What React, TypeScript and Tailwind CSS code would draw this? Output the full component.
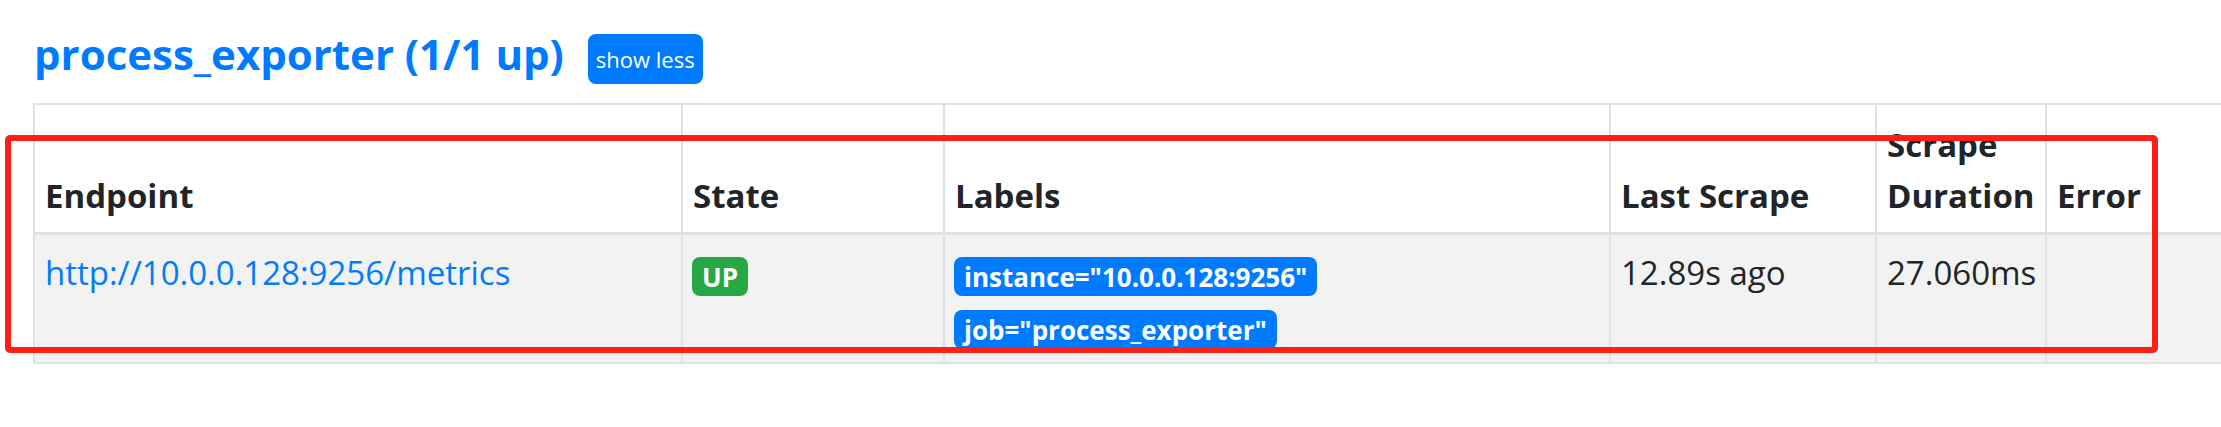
const headers = ["Endpoint", "State", "Labels", "Last Scrape", "Scrape Duration", "Error"];

const labels = ['instance="10.0.0.128:9256"', 'job="process_exporter"'];

const Badge = ({ color, children }: { color: string; children: React.ReactNode }) => (
  <span className={`inline-block rounded-[8px] px-[10px] py-[6.5px] text-[26px] font-bold leading-none text-white ${color}`}>
    {children}
  </span>
);

const App = () => {
  return (
    <div className="relative h-[427px] w-[2221px] overflow-hidden bg-white font-['Open_Sans',sans-serif] text-[#212529]">
      <div className="pl-[33px] pt-[34px]">
        <div className="flex h-[50px] items-center">
          <h2 className="mb-[10px] ml-[1px] text-[42px] font-bold leading-none text-[#007bff]">process_exporter (1/1 up)</h2>
          <button className="ml-[24px] h-[50px] rounded-[8px] bg-[#007bff] px-[8px] text-[22px] text-white">show less</button>
        </div>

        <div className="mt-[19px] grid w-[2300px] grid-cols-[648px_262px_666px_266px_170px_288px] border-l-2 border-t-2 border-[#dee2e6]">
          {headers.map((h) => (
            <div
              key={h}
              className="flex h-[130px] flex-col justify-end border-b-[3px] border-r-2 border-[#dee2e6] bg-white px-[10px] pb-[11px] text-[33px] font-bold leading-[51px]"
            >
              {h === "Scrape Duration" ? (
                <>
                  <span>Scrape</span>
                  <span>Duration</span>
                </>
              ) : (
                h
              )}
            </div>
          ))}

          <div className="h-[129px] border-b-2 border-r-2 border-[#dee2e6] bg-[#f2f2f2] px-[10px] pt-[12px] text-[33px] leading-[51px]">
            <a className="text-[#007bff]">http://10.0.0.128:9256/metrics</a>
          </div>
          <div className="border-b-2 border-r-2 border-[#dee2e6] bg-[#f2f2f2] px-[9px] pt-[22px]">
            <Badge color="bg-[#28a745]">UP</Badge>
          </div>
          <div className="flex flex-col items-start gap-[14px] border-b-2 border-r-2 border-[#dee2e6] bg-[#f2f2f2] px-[9px] pt-[22px]">
            {labels.map((l) => (
              <Badge key={l} color="bg-[#007bff]">
                {l}
              </Badge>
            ))}
          </div>
          <div className="border-b-2 border-r-2 border-[#dee2e6] bg-[#f2f2f2] px-[10px] pt-[12px] text-[33px] leading-[51px]">
            12.89s ago
          </div>
          <div className="border-b-2 border-r-2 border-[#dee2e6] bg-[#f2f2f2] px-[10px] pt-[12px] text-[33px] leading-[51px]">
            27.060ms
          </div>
          <div className="border-b-2 border-r-2 border-[#dee2e6] bg-[#f2f2f2]" />
        </div>
      </div>

      <div className="pointer-events-none absolute left-[5px] top-[135px] h-[218px] w-[2153px] rounded-[5px] border-[6px] border-[#fe2016]" />
    </div>
  );
};

export default App;
